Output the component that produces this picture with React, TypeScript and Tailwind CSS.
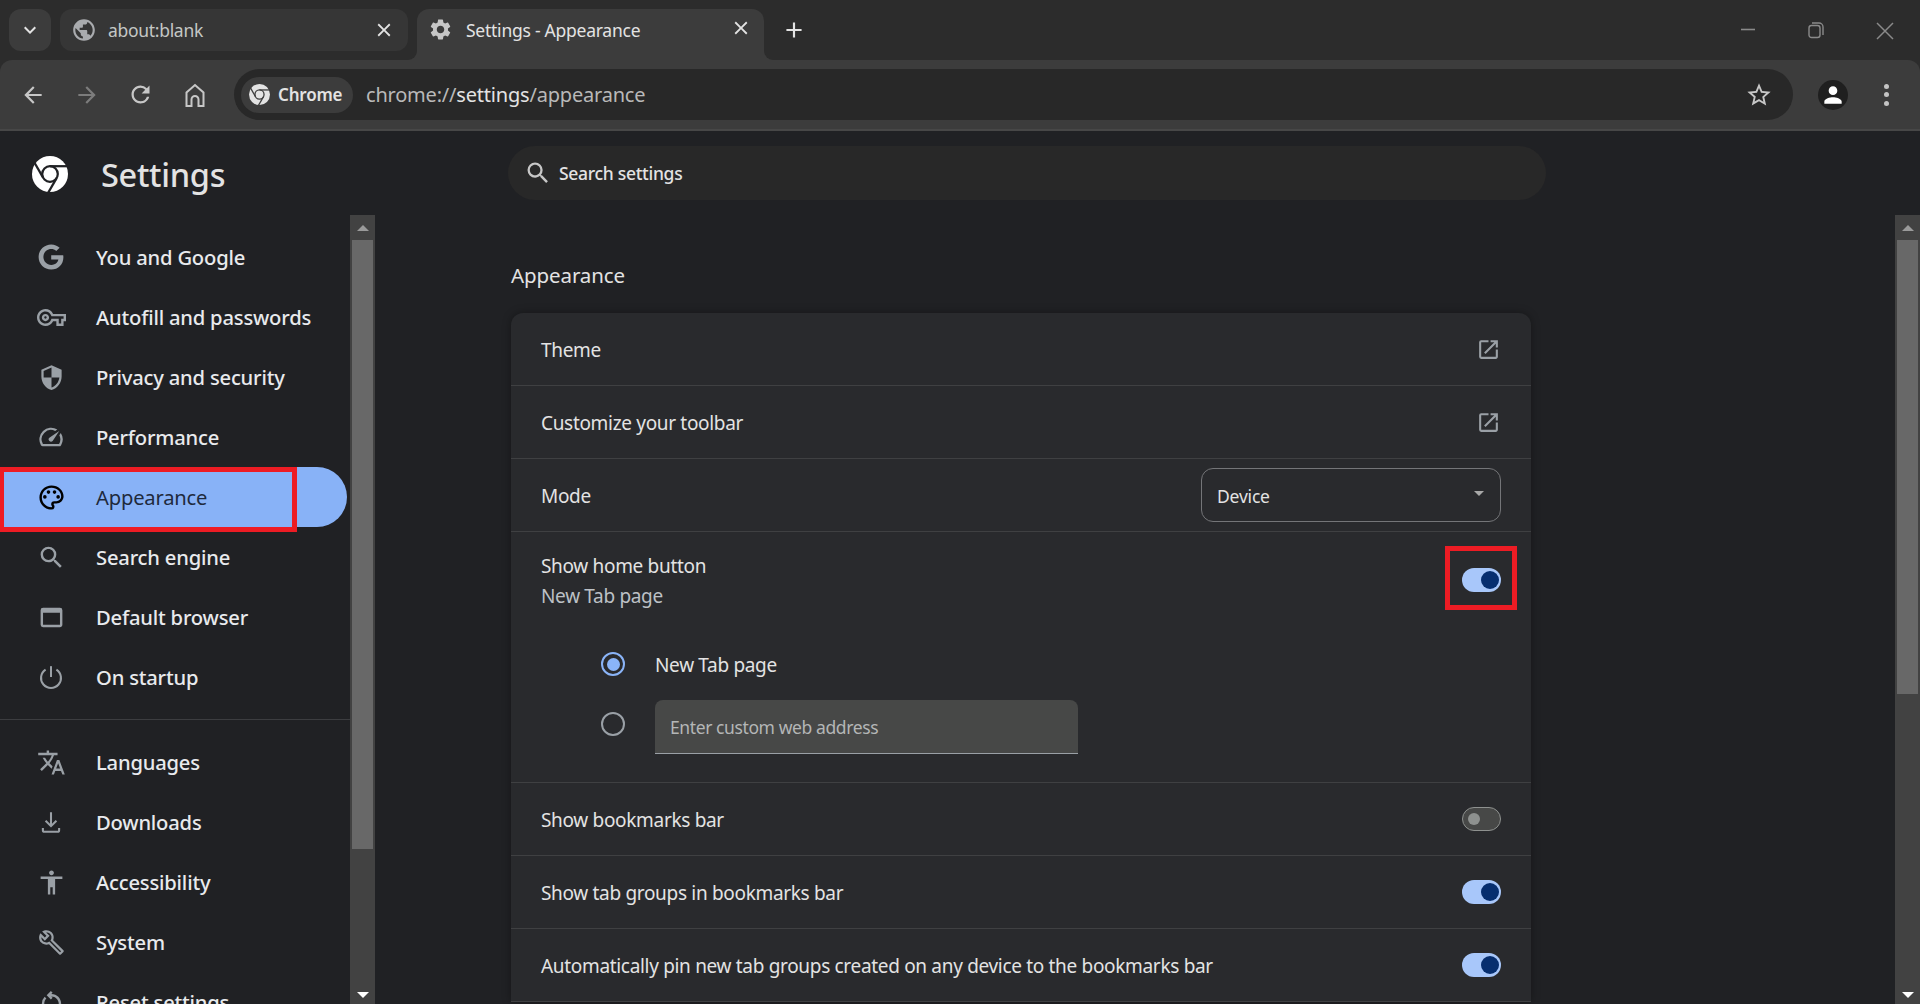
import { ReactNode } from 'react';
import {
  MdAccessibility, MdArrowBack, MdArrowForward, MdClose, MdExpandMore, MdOutlineBuild,
  MdOutlineOpenInNew, MdOutlinePalette, MdOutlineRestartAlt, MdOutlineVpnKey, MdPerson,
  MdPublic, MdRefresh, MdSearch, MdSecurity, MdSettings, MdSpeed, MdStarBorder, MdTranslate,
  MdOutlineWebAsset, MdAdd,
} from 'react-icons/md';
import { FaGoogle } from 'react-icons/fa';

const ChromeLogo = ({ size, gap, className }: { size: number; gap: string; className?: string }) => (
  <svg width={size} height={size} viewBox="0 0 24 24" className={className}>
    <circle cx="12" cy="12" r="12" fill="currentColor" />
    <circle cx="12" cy="12" r="5.2" fill="none" stroke={gap} strokeWidth="1.5" />
    <g stroke={gap} strokeWidth="1.5">
      <path d="M12 6.8H24" />
      <path d="M12 6.8H24" transform="rotate(120 12 12)" />
      <path d="M12 6.8H24" transform="rotate(240 12 12)" />
    </g>
  </svg>
);

const navTop = [
  { label: 'You and Google', icon: <FaGoogle size={26} /> },
  { label: 'Autofill and passwords', icon: <MdOutlineVpnKey size={29} /> },
  { label: 'Privacy and security', icon: <MdSecurity size={27} /> },
  { label: 'Performance', icon: <MdSpeed size={28} /> },
  { label: 'Appearance', icon: <MdOutlinePalette size={29} />, active: true },
  { label: 'Search engine', icon: <MdSearch size={29} /> },
  { label: 'Default browser', icon: <MdOutlineWebAsset size={29} /> },
  {
    label: 'On startup',
    icon: (
      <svg width="26" height="26" viewBox="0 0 24 24" fill="none" stroke="currentColor" strokeWidth="1.9">
        <path d="M12 2v10" />
        <path d="M7 5.2a9.2 9.2 0 1 0 10 0" />
      </svg>
    ),
  },
];

const navBottom = [
  { label: 'Languages', icon: <MdTranslate size={29} /> },
  {
    label: 'Downloads',
    icon: (
      <svg width="26" height="26" viewBox="0 0 24 24" fill="none" stroke="currentColor" strokeWidth="1.9">
        <path d="M12 3v12.5M7 10.8l5 5 5-5" />
        <path d="M4.5 17.5v2a1.5 1.5 0 0 0 1.5 1.5h12a1.5 1.5 0 0 0 1.5-1.5v-2" />
      </svg>
    ),
  },
  { label: 'Accessibility', icon: <MdAccessibility size={29} /> },
  { label: 'System', icon: <MdOutlineBuild size={27} /> },
  { label: 'Reset settings', icon: <MdOutlineRestartAlt size={29} /> },
];

const NavItem = ({ label, icon, active }: { label: string; icon: ReactNode; active?: boolean }) => (
  <div className="relative h-[60px] shrink-0 flex items-center">
    {active && <div className="absolute left-0 top-0 h-[60px] w-[347px] rounded-r-[30px] bg-[#88b2f7]" />}
    {active && <div className="absolute left-0 top-0 h-[65px] w-[297px] border-[5px] border-l-[4px] border-[#ed1c24]" />}
    <span className={`relative w-[102px] flex justify-center shrink-0 ${active ? 'text-black' : 'text-[#9aa0a6]'}`}>{icon}</span>
    <span className={`relative -ml-[6px] text-[20.2px] tracking-[-0.2px] ${active ? 'font-normal text-[#1f2a3d]' : 'font-medium text-[#e8eaed]'}`}>{label}</span>
  </div>
);

const Toggle = ({ on = true }: { on?: boolean }) =>
  on ? (
    <div className="w-[39px] h-[24px] rounded-full bg-[#a8c7fa] flex items-center justify-end pr-[2px]">
      <div className="w-[18px] h-[18px] rounded-full bg-[#062e6f]" />
    </div>
  ) : (
    <div className="w-[39px] h-[24px] rounded-full bg-[#474847] border border-[#8e918f] flex items-center pl-[5px]">
      <div className="w-[12px] h-[12px] rounded-full bg-[#8e918f]" />
    </div>
  );

const Row = ({ label, children }: { label: string; children?: ReactNode }) => (
  <div className="h-[73px] shrink-0 border-b border-[#3f4042] pl-[30px] pr-[30px] flex items-center justify-between">
    <span className="translate-y-[1px] text-[19px] tracking-[-0.32px] text-[#e3e3e3]">{label}</span>
    {children}
  </div>
);

const ScrollTrack = ({ thumb, className = '' }: { thumb: string; className?: string }) => (
  <div className={`w-[25px] shrink-0 bg-[#424242] flex flex-col items-center ${className}`}>
    <div className="h-[25px] shrink-0 flex items-center justify-center">
      <div className="w-0 h-0 border-x-[6px] border-x-transparent border-b-[6px] border-b-[#9a9a9a]" />
    </div>
    <div className={`w-[21px] bg-[#686868] ${thumb}`} />
    <div className="flex-1" />
    <div className="h-[12px] shrink-0 flex items-start justify-center">
      <div className="w-0 h-0 border-x-[6px] border-x-transparent border-t-[6px] border-t-white" />
    </div>
  </div>
);

const App = () => {
  return (
    <div className="w-full h-[1004px] overflow-hidden flex flex-col bg-[#202124] font-['Noto_Sans','Open_Sans',sans-serif]">
      {/* tab strip */}
      <div className="h-[60px] shrink-0 bg-[#2c2c2c] flex pl-[9px] pt-[9px]">
        <div className="w-[42px] h-[42px] rounded-[12px] bg-[#3c3c3c] flex items-center justify-center text-[#e3e3e3]">
          <MdExpandMore size={24} />
        </div>
        <div className="ml-[9px] w-[348px] h-[42px] rounded-[12px] bg-[#363636] flex items-center pl-[11px] pr-[13px] text-[#c4c7c5]">
          <MdPublic size={26} className="text-[#a9abae]" />
          <span className="ml-[11px] flex-1 text-[17.5px] tracking-[-0.3px]">about:blank</span>
          <MdClose size={22} className="text-[#e3e3e3]" />
        </div>
        <div className="relative ml-[9px] w-[347px] h-[51px] rounded-t-[12px] bg-[#3c3c3c] flex items-start pt-[8px] pl-[11px] pr-[12px] text-[#e3e3e3]">
          <div className="absolute -left-[9px] bottom-0 w-[9px] h-[9px] bg-[#3c3c3c]">
            <div className="w-[9px] h-[9px] rounded-br-[9px] bg-[#2c2c2c]" />
          </div>
          <div className="absolute -right-[9px] bottom-0 w-[9px] h-[9px] bg-[#3c3c3c]">
            <div className="w-[9px] h-[9px] rounded-bl-[9px] bg-[#2c2c2c]" />
          </div>
          <MdSettings size={25} className="text-[#c7c7c7]" />
          <span className="ml-[13px] flex-1 text-[17.5px] tracking-[-0.25px]">Settings - Appearance</span>
          <MdClose size={22} />
        </div>
        <div className="ml-[17px] mt-[8px] text-[#e3e3e3]">
          <MdAdd size={26} />
        </div>
        <div className="flex-1" />
        <div className="flex items-start text-[#8a8a8a] pt-[13px]">
          <svg width="16" height="16" viewBox="0 0 16 16" className="mr-[52px]"><path d="M1 7.5h14" stroke="currentColor" strokeWidth="1.6" /></svg>
          <svg width="16" height="17" viewBox="0 0 16 17" className="mr-[52px]" fill="none" stroke="currentColor" strokeWidth="1.4">
            <rect x="1" y="3.5" width="11" height="12" rx="2.5" />
            <path d="M4 1h7a4 4 0 0 1 4 4v8" />
          </svg>
          <svg width="18" height="18" viewBox="0 0 18 18" className="mr-[26px]" stroke="currentColor" strokeWidth="1.5"><path d="M1 1l16 16M17 1L1 17" /></svg>
        </div>
      </div>

      {/* toolbar */}
      <div className="h-[71px] shrink-0 bg-[#2c2c2c]">
        <div className="h-[71px] rounded-t-[12px] bg-[#3c3c3c] border-b-2 border-[#474747] flex items-start pt-[9px]">
          <div className="w-[234px] h-[51px] shrink-0 flex items-center text-[#c7c7c7]">
            <MdArrowBack size={26} className="ml-[20px]" />
            <MdArrowForward size={26} className="ml-[28px] text-[#7c7c7c]" />
            <MdRefresh size={27} className="ml-[27px]" />
            <svg width="24" height="26" viewBox="0 0 24 26" fill="none" stroke="currentColor" strokeWidth="2" className="ml-[29px]">
              <path d="M3.5 24V10.5L12 3l8.500 7.500V24H15.500v-6.500a3.500 3.500 0 0 0-7 0V24z" />
            </svg>
          </div>
          <div className="w-[1559px] h-[51px] rounded-full bg-[#282828] flex items-center pl-[7px] pr-[20px]">
            <div className="w-[112px] h-[36px] rounded-full bg-[#3c3c3c] flex items-center pl-[8px] text-[#e3e3e3]">
              <ChromeLogo size={21} gap="#3c3c3c" />
              <span className="ml-[8px] text-[17px] font-semibold tracking-[-0.2px]">Chrome</span>
            </div>
            <span className="ml-[13px] flex-1 text-[20px] tracking-[-0.2px] text-[#b9b9b9]">
              chrome://<span className="text-[#e3e3e3]">settings</span>/appearance
            </span>
            <MdStarBorder size={28} className="text-[#c7c7c7]" />
          </div>
          <div className="flex-1 flex items-center h-[51px] text-[#c7c7c7]">
            <div className="ml-[25px] w-[30px] h-[30px] rounded-full bg-[#1f1f1f] flex items-center justify-center text-white">
              <MdPerson size={26} />
            </div>
            <div className="ml-[36px] flex flex-col gap-[3.5px]">
              <div className="w-[5px] h-[5px] rounded-full bg-[#c4c4c4]" />
              <div className="w-[5px] h-[5px] rounded-full bg-[#c4c4c4]" />
              <div className="w-[5px] h-[5px] rounded-full bg-[#c4c4c4]" />
            </div>
          </div>
        </div>
      </div>

      <div className="flex-1 min-h-0 flex">
        {/* sidebar */}
        <div className="w-[375px] shrink-0 flex flex-col">
          <div className="h-[84px] shrink-0 flex items-center pl-[32px]">
            <ChromeLogo size={36} gap="#202124" className="text-white translate-y-[1px]" />
            <span className="ml-[33px] translate-y-[2px] text-[32.5px] font-medium text-[#e3e3e3] tracking-[-0.3px]">Settings</span>
          </div>
          <div className="flex-1 min-h-0 flex">
            <div className="w-[350px] shrink-0 overflow-hidden flex flex-col pt-[12px]">
              {navTop.map((item) => <NavItem key={item.label} {...item} />)}
              <div className="mt-[12px] h-px shrink-0 bg-[#3c3d40]" />
              <div className="h-[12px] shrink-0" />
              {navBottom.map((item) => <NavItem key={item.label} {...item} />)}
            </div>
            <ScrollTrack thumb="h-[609px]" />
          </div>
        </div>

        {/* main */}
        <div className="flex-1 min-w-0 overflow-hidden flex flex-col pt-[15px]">
          <div className="ml-[133px] w-[1038px] h-[54px] shrink-0 rounded-full bg-[#282828] flex items-center pl-[16px] text-[#e3e3e3]">
            <MdSearch size={28} className="text-[#c7c7c7]" />
            <span className="ml-[7px] text-[17.5px] font-medium tracking-[-0.3px]">Search settings</span>
          </div>
          <div className="ml-[136px] h-[113px] shrink-0 flex items-end pb-[24px]">
            <span className="text-[20.5px] tracking-[-0.1px] leading-[28px] text-[#e3e3e3]">Appearance</span>
          </div>
          <div className="ml-[136px] w-[1020px] shrink-0 rounded-t-[12px] bg-[#292a2d] shadow-[0_0_8px_rgba(0,0,0,0.35)] flex flex-col">
            <Row label="Theme"><MdOutlineOpenInNew size={25} className="text-[#9aa0a6]" /></Row>
            <Row label="Customize your toolbar"><MdOutlineOpenInNew size={25} className="text-[#9aa0a6]" /></Row>
            <Row label="Mode">
              <div className="w-[300px] h-[54px] rounded-[12px] border border-[#747578] flex items-center justify-between pl-[15px] pr-[16px]">
                <span className="translate-y-[1px] text-[17.5px] tracking-[-0.2px] text-[#e3e3e3]">Device</span>
                <div className="w-0 h-0 -translate-y-[2px] border-x-[5px] border-x-transparent border-t-[5px] border-t-[#a8a8a8]" />
              </div>
            </Row>
            <div className="h-[251px] shrink-0 border-b border-[#3f4042] flex flex-col">
              <div className="h-[96px] shrink-0 pl-[30px] pr-[30px] flex items-center justify-between">
                <div className="flex flex-col gap-[3px]">
                  <span className="translate-y-[1px] text-[19px] tracking-[-0.32px] leading-[27px] text-[#e3e3e3]">Show home button</span>
                  <span className="translate-y-[1px] text-[19px] tracking-[-0.32px] leading-[27px] text-[#bdc1c6]">New Tab page</span>
                </div>
                <div className="relative">
                  <Toggle />
                  <div className="absolute -left-[17px] -top-[22px] w-[72px] h-[64px] border-[5px] border-[#ed1c24]" />
                </div>
              </div>
              <div className="mt-[6px] h-[60px] shrink-0 flex items-center pl-[90px]">
                <div className="w-[24px] h-[24px] rounded-full border-[2.5px] border-[#8ab4f8] flex items-center justify-center">
                  <div className="w-[13px] h-[13px] rounded-full bg-[#8ab4f8]" />
                </div>
                <span className="ml-[30px] translate-y-[1px] text-[19px] tracking-[-0.32px] text-[#e3e3e3]">New Tab page</span>
              </div>
              <div className="mt-[6px] h-[54px] shrink-0 flex items-start pl-[90px]">
                <div className="mt-[12px] w-[24px] h-[24px] rounded-full border-[2.5px] border-[#9aa0a6]" />
                <div className="ml-[30px] w-[423px] h-[54px] rounded-t-[8px] bg-[#474847] border-b border-[#9aa0a6] flex items-center pl-[15px]">
                  <span className="translate-y-[1px] text-[17.5px] tracking-[-0.4px] text-[#b4b6b6]">Enter custom web address</span>
                </div>
              </div>
            </div>
            <Row label="Show bookmarks bar"><Toggle on={false} /></Row>
            <Row label="Show tab groups in bookmarks bar"><Toggle /></Row>
            <Row label="Automatically pin new tab groups created on any device to the bookmarks bar"><Toggle /></Row>
          </div>
        </div>

        <ScrollTrack thumb="h-[454px]" className="mt-[84px]" />
      </div>
    </div>
  );
};

export default App;
